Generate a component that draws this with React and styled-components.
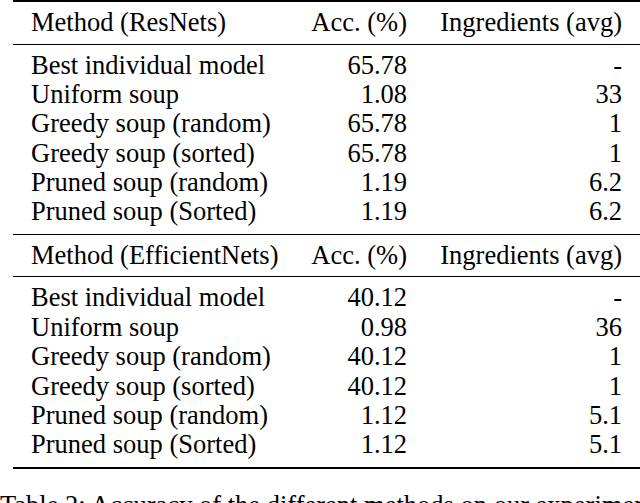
import React from 'react';
import styled, { createGlobalStyle } from 'styled-components';

const GlobalStyle = createGlobalStyle`
  html, body {
    margin: 0;
    padding: 0;
    background: #ffffff;
    overflow: hidden;
  }
  body {
    font-family: 'Liberation Serif', serif;
    color: #000000;
  }
`;

const sections = [
    {
        title: 'Method (ResNets)',
        rows: [
            ['Best individual model', '65.78', '-'],
            ['Uniform soup', '1.08', '33'],
            ['Greedy soup (random)', '65.78', '1'],
            ['Greedy soup (sorted)', '65.78', '1'],
            ['Pruned soup (random)', '1.19', '6.2'],
            ['Pruned soup (Sorted)', '1.19', '6.2'],
        ],
    },
    {
        title: 'Method (EfficientNets)',
        rows: [
            ['Best individual model', '40.12', '-'],
            ['Uniform soup', '0.98', '36'],
            ['Greedy soup (random)', '40.12', '1'],
            ['Greedy soup (sorted)', '40.12', '1'],
            ['Pruned soup (random)', '1.12', '5.1'],
            ['Pruned soup (Sorted)', '1.12', '5.1'],
        ],
    },
];

const App = () => {
    return (
        <Page>
            <GlobalStyle />
            <Table>
                <Rule $thick />
                {sections.map((section, i) => (
                    <Section key={section.title}>
                        {i > 0 && <Rule />}
                        <Row $head>
                            <Cell>{section.title}</Cell>
                            <Cell $num>Acc. (%)</Cell>
                            <Cell $num>Ingredients (avg)</Cell>
                        </Row>
                        <Rule />
                        <Body>
                            {section.rows.map((r) => (
                                <Row key={r[0]}>
                                    <Cell>{r[0]}</Cell>
                                    <Cell $num>{r[1]}</Cell>
                                    <Cell $num>{r[2]}</Cell>
                                </Row>
                            ))}
                        </Body>
                    </Section>
                ))}
                <Rule $thick />
            </Table>
            <Caption>Table 2: Accuracy of the different methods on our experiment.</Caption>
        </Page>
    );
};

export default App;

const Page = styled.div`
  width: 640px;
  height: 503px;
  overflow: hidden;
  font-family: 'Liberation Serif', serif;
  font-size: 26.5px;
  color: #000000;
`;

const Table = styled.div`
  margin-left: 13px;
  width: 627px;
`;

const Section = styled.div``;

const Rule = styled.div`
  height: ${({ $thick }) => ($thick ? '2px' : '1px')};
  background: #000000;
`;

const Body = styled.div`
  padding: 6px 0 7px;
`;

const Row = styled.div`
  display: grid;
  grid-template-columns: 259px 117px 215px;
  padding: 0 18px;
  height: ${({ $head }) => ($head ? '41.5px' : '29.4px')};
  align-items: center;
  line-height: 29.4px;
`;

const Cell = styled.div`
  font-family: 'Liberation Serif', serif;
  white-space: nowrap;
  text-align: ${({ $num }) => ($num ? 'right' : 'left')};
`;

const Caption = styled.div`
  margin-top: 21px;
  line-height: 30px;
  white-space: nowrap;
  overflow: hidden;
`;
